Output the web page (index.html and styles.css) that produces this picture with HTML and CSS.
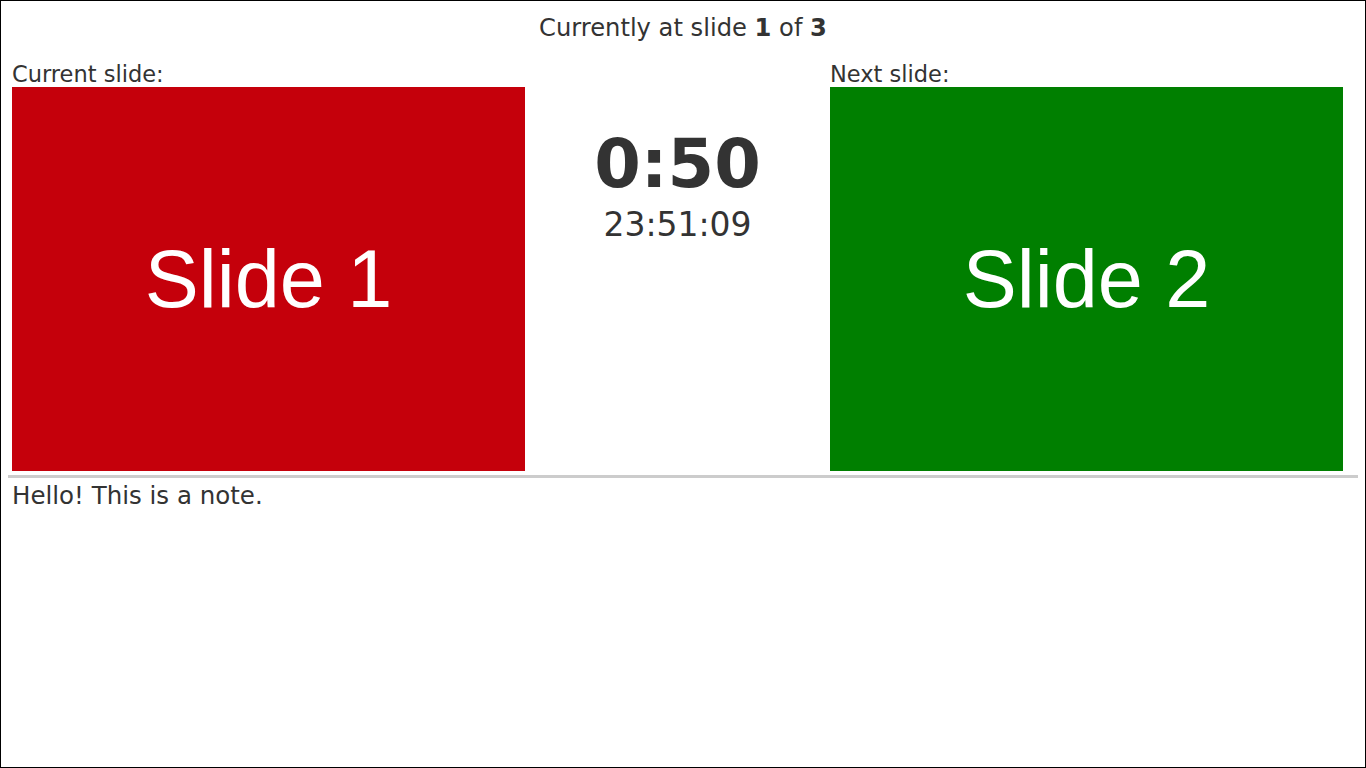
FILE: index.html
```html
<!DOCTYPE html>
<html>
<head>
<meta charset="utf-8">
<link rel="stylesheet" href="styles.css">
</head>
<body>
<div class="frame">
  <div class="status">Currently at slide <b>1</b> of <b>3</b></div>
  <div class="row">
    <div class="col">
      <div class="label">Current slide:</div>
      <div class="slide red"><span>Slide 1</span></div>
    </div>
    <div class="middle">
      <div class="timer">0:50</div>
      <div class="clock">23:51:09</div>
    </div>
    <div class="col">
      <div class="label">Next slide:</div>
      <div class="slide green"><span>Slide 2</span></div>
    </div>
  </div>
  <div class="notes">Hello! This is a note.</div>
</div>
</body>
</html>
```

FILE: styles.css
```css
html, body {
  margin: 0;
  padding: 0;
}
body {
  font-family: "DejaVu Sans", sans-serif;
  color: #333;
  background: #fff;
}
.frame {
  box-sizing: border-box;
  width: 1366px;
  height: 768px;
  border: 1px solid #000;
  padding: 0 7px;
}
.status {
  text-align: center;
  font-size: 24.2px;
  line-height: 28px;
  padding-top: 13px;
}
.row {
  display: flex;
  padding: 0 4px;
  margin-top: 19px;
}
.col {
  width: 513px;
  display: flex;
  flex-direction: column;
}
.label {
  font-size: 22.5px;
  line-height: 26px;
}
.slide {
  height: 384px;
  display: flex;
  align-items: center;
  justify-content: center;
  color: #fff;
  font-family: "Liberation Sans", Arial, sans-serif;
  font-size: 81px;
}
.red { background: #c5000b; }
.green { background: #007f00; }
.middle {
  width: 305px;
  text-align: center;
  padding-top: 63px;
}
.timer {
  font-size: 67px;
  font-weight: bold;
  line-height: 80px;
}
.clock {
  font-size: 33px;
  line-height: 42px;
}
.notes {
  margin-top: 4px;
  border-top: 3px solid #ccc;
  padding: 3px 4px;
  font-size: 24.5px;
  line-height: 29px;
}
```
